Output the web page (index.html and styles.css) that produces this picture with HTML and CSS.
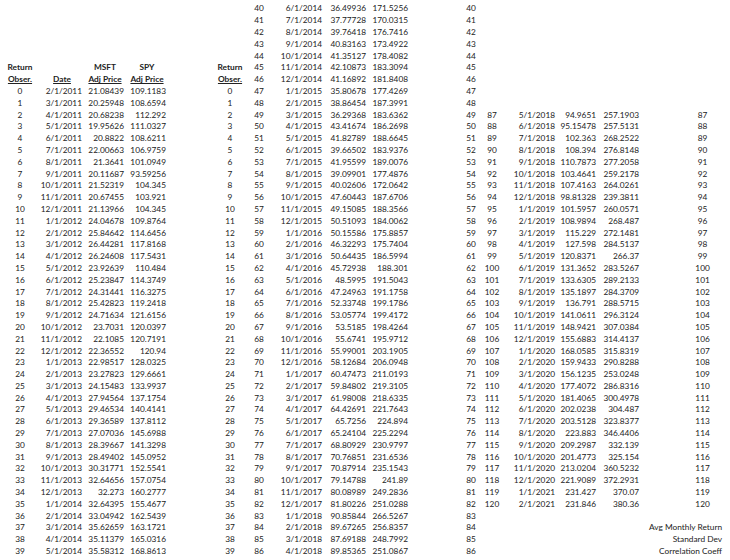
FILE: index.html
```html
<!DOCTYPE html>
<html>
<head>
<meta charset="utf-8">
<title>MSFT SPY Returns</title>
<link rel="stylesheet" href="styles.css">
</head>
<body>
<table class="sheet">
<colgroup>
<col class="ca"><col class="cb"><col class="cc"><col class="cd"><col class="g1">
<col class="ce"><col class="cf"><col class="cg"><col class="ch"><col class="ci"><col class="g2">
<col class="cj"><col class="ck"><col class="cl"><col class="cm"><col class="cn"><col class="g3"><col class="co">
</colgroup>
<tbody>
<tr><td colspan="6"></td><td class="i">40</td><td>6/1/2014</td><td>36.49936</td><td>171.5256</td><td></td><td class="i">40</td><td colspan="6"></td></tr>
<tr><td colspan="6"></td><td class="i">41</td><td>7/1/2014</td><td>37.77728</td><td>170.0315</td><td></td><td class="i">41</td><td colspan="6"></td></tr>
<tr><td colspan="6"></td><td class="i">42</td><td>8/1/2014</td><td>39.76418</td><td>176.7416</td><td></td><td class="i">42</td><td colspan="6"></td></tr>
<tr><td colspan="6"></td><td class="i">43</td><td>9/1/2014</td><td>40.83163</td><td>173.4922</td><td></td><td class="i">43</td><td colspan="6"></td></tr>
<tr><td colspan="6"></td><td class="i">44</td><td>10/1/2014</td><td>41.35127</td><td>178.4082</td><td></td><td class="i">44</td><td colspan="6"></td></tr>
<tr><td class="h">Return</td><td></td><td class="h">MSFT</td><td class="h">SPY</td><td></td><td class="h">Return</td><td class="i">45</td><td>11/1/2014</td><td>42.10873</td><td>183.3094</td><td></td><td class="i">45</td><td colspan="6"></td></tr>
<tr><td class="h u">Obser.</td><td class="h u">Date</td><td class="h u">Adj Price</td><td class="h u">Adj Price</td><td></td><td class="h u">Obser.</td><td class="i">46</td><td>12/1/2014</td><td>41.16892</td><td>181.8408</td><td></td><td class="i">46</td><td colspan="6"></td></tr>
<tr><td class="i">0</td><td>2/1/2011</td><td>21.08439</td><td>109.1183</td><td></td><td class="i">0</td><td class="i">47</td><td>1/1/2015</td><td>35.80678</td><td>177.4269</td><td></td><td class="i">47</td><td colspan="6"></td></tr>
<tr><td class="i">1</td><td>3/1/2011</td><td>20.25948</td><td>108.6594</td><td></td><td class="i">1</td><td class="i">48</td><td>2/1/2015</td><td>38.86454</td><td>187.3991</td><td></td><td class="i">48</td><td colspan="6"></td></tr>
<tr><td class="i">2</td><td>4/1/2011</td><td>20.68238</td><td>112.292</td><td></td><td class="i">2</td><td class="i">49</td><td>3/1/2015</td><td>36.29368</td><td>183.6362</td><td></td><td class="i">49</td><td class="i">87</td><td>5/1/2018</td><td>94.9651</td><td>257.1903</td><td></td><td class="i">87</td></tr>
<tr><td class="i">3</td><td>5/1/2011</td><td>19.95626</td><td>111.0327</td><td></td><td class="i">3</td><td class="i">50</td><td>4/1/2015</td><td>43.41674</td><td>186.2698</td><td></td><td class="i">50</td><td class="i">88</td><td>6/1/2018</td><td>95.15478</td><td>257.5131</td><td></td><td class="i">88</td></tr>
<tr><td class="i">4</td><td>6/1/2011</td><td>20.8822</td><td>108.6211</td><td></td><td class="i">4</td><td class="i">51</td><td>5/1/2015</td><td>41.82789</td><td>188.6645</td><td></td><td class="i">51</td><td class="i">89</td><td>7/1/2018</td><td>102.363</td><td>268.2522</td><td></td><td class="i">89</td></tr>
<tr><td class="i">5</td><td>7/1/2011</td><td>22.00663</td><td>106.9759</td><td></td><td class="i">5</td><td class="i">52</td><td>6/1/2015</td><td>39.66502</td><td>183.9376</td><td></td><td class="i">52</td><td class="i">90</td><td>8/1/2018</td><td>108.394</td><td>276.8148</td><td></td><td class="i">90</td></tr>
<tr><td class="i">6</td><td>8/1/2011</td><td>21.3641</td><td>101.0949</td><td></td><td class="i">6</td><td class="i">53</td><td>7/1/2015</td><td>41.95599</td><td>189.0076</td><td></td><td class="i">53</td><td class="i">91</td><td>9/1/2018</td><td>110.7873</td><td>277.2058</td><td></td><td class="i">91</td></tr>
<tr><td class="i">7</td><td>9/1/2011</td><td>20.11687</td><td>93.59256</td><td></td><td class="i">7</td><td class="i">54</td><td>8/1/2015</td><td>39.09901</td><td>177.4876</td><td></td><td class="i">54</td><td class="i">92</td><td>10/1/2018</td><td>103.4641</td><td>259.2178</td><td></td><td class="i">92</td></tr>
<tr><td class="i">8</td><td>10/1/2011</td><td>21.52319</td><td>104.345</td><td></td><td class="i">8</td><td class="i">55</td><td>9/1/2015</td><td>40.02606</td><td>172.0642</td><td></td><td class="i">55</td><td class="i">93</td><td>11/1/2018</td><td>107.4163</td><td>264.0261</td><td></td><td class="i">93</td></tr>
<tr><td class="i">9</td><td>11/1/2011</td><td>20.67455</td><td>103.921</td><td></td><td class="i">9</td><td class="i">56</td><td>10/1/2015</td><td>47.60443</td><td>187.6706</td><td></td><td class="i">56</td><td class="i">94</td><td>12/1/2018</td><td>98.81328</td><td>239.3811</td><td></td><td class="i">94</td></tr>
<tr><td class="i">10</td><td>12/1/2011</td><td>21.13966</td><td>104.345</td><td></td><td class="i">10</td><td class="i">57</td><td>11/1/2015</td><td>49.15085</td><td>188.3566</td><td></td><td class="i">57</td><td class="i">95</td><td>1/1/2019</td><td>101.5957</td><td>260.0571</td><td></td><td class="i">95</td></tr>
<tr><td class="i">11</td><td>1/1/2012</td><td>24.04678</td><td>109.8764</td><td></td><td class="i">11</td><td class="i">58</td><td>12/1/2015</td><td>50.51093</td><td>184.0062</td><td></td><td class="i">58</td><td class="i">96</td><td>2/1/2019</td><td>108.9894</td><td>268.487</td><td></td><td class="i">96</td></tr>
<tr><td class="i">12</td><td>2/1/2012</td><td>25.84642</td><td>114.6456</td><td></td><td class="i">12</td><td class="i">59</td><td>1/1/2016</td><td>50.15586</td><td>175.8857</td><td></td><td class="i">59</td><td class="i">97</td><td>3/1/2019</td><td>115.229</td><td>272.1481</td><td></td><td class="i">97</td></tr>
<tr><td class="i">13</td><td>3/1/2012</td><td>26.44281</td><td>117.8168</td><td></td><td class="i">13</td><td class="i">60</td><td>2/1/2016</td><td>46.32293</td><td>175.7404</td><td></td><td class="i">60</td><td class="i">98</td><td>4/1/2019</td><td>127.598</td><td>284.5137</td><td></td><td class="i">98</td></tr>
<tr><td class="i">14</td><td>4/1/2012</td><td>26.24608</td><td>117.5431</td><td></td><td class="i">14</td><td class="i">61</td><td>3/1/2016</td><td>50.64435</td><td>186.5994</td><td></td><td class="i">61</td><td class="i">99</td><td>5/1/2019</td><td>120.8371</td><td>266.37</td><td></td><td class="i">99</td></tr>
<tr><td class="i">15</td><td>5/1/2012</td><td>23.92639</td><td>110.484</td><td></td><td class="i">15</td><td class="i">62</td><td>4/1/2016</td><td>45.72938</td><td>188.301</td><td></td><td class="i">62</td><td class="i">100</td><td>6/1/2019</td><td>131.3652</td><td>283.5267</td><td></td><td class="i">100</td></tr>
<tr><td class="i">16</td><td>6/1/2012</td><td>25.23847</td><td>114.3749</td><td></td><td class="i">16</td><td class="i">63</td><td>5/1/2016</td><td>48.5995</td><td>191.5043</td><td></td><td class="i">63</td><td class="i">101</td><td>7/1/2019</td><td>133.6305</td><td>289.2133</td><td></td><td class="i">101</td></tr>
<tr><td class="i">17</td><td>7/1/2012</td><td>24.31441</td><td>116.3275</td><td></td><td class="i">17</td><td class="i">64</td><td>6/1/2016</td><td>47.24963</td><td>191.1758</td><td></td><td class="i">64</td><td class="i">102</td><td>8/1/2019</td><td>135.1897</td><td>284.3709</td><td></td><td class="i">102</td></tr>
<tr><td class="i">18</td><td>8/1/2012</td><td>25.42823</td><td>119.2418</td><td></td><td class="i">18</td><td class="i">65</td><td>7/1/2016</td><td>52.33748</td><td>199.1786</td><td></td><td class="i">65</td><td class="i">103</td><td>9/1/2019</td><td>136.791</td><td>288.5715</td><td></td><td class="i">103</td></tr>
<tr><td class="i">19</td><td>9/1/2012</td><td>24.71634</td><td>121.6156</td><td></td><td class="i">19</td><td class="i">66</td><td>8/1/2016</td><td>53.05774</td><td>199.4172</td><td></td><td class="i">66</td><td class="i">104</td><td>10/1/2019</td><td>141.0611</td><td>296.3124</td><td></td><td class="i">104</td></tr>
<tr><td class="i">20</td><td>10/1/2012</td><td>23.7031</td><td>120.0397</td><td></td><td class="i">20</td><td class="i">67</td><td>9/1/2016</td><td>53.5185</td><td>198.4264</td><td></td><td class="i">67</td><td class="i">105</td><td>11/1/2019</td><td>148.9421</td><td>307.0384</td><td></td><td class="i">105</td></tr>
<tr><td class="i">21</td><td>11/1/2012</td><td>22.1085</td><td>120.7191</td><td></td><td class="i">21</td><td class="i">68</td><td>10/1/2016</td><td>55.6741</td><td>195.9712</td><td></td><td class="i">68</td><td class="i">106</td><td>12/1/2019</td><td>155.6883</td><td>314.4137</td><td></td><td class="i">106</td></tr>
<tr><td class="i">22</td><td>12/1/2012</td><td>22.36552</td><td>120.94</td><td></td><td class="i">22</td><td class="i">69</td><td>11/1/2016</td><td>55.99001</td><td>203.1905</td><td></td><td class="i">69</td><td class="i">107</td><td>1/1/2020</td><td>168.0585</td><td>315.8319</td><td></td><td class="i">107</td></tr>
<tr><td class="i">23</td><td>1/1/2013</td><td>22.98517</td><td>128.0325</td><td></td><td class="i">23</td><td class="i">70</td><td>12/1/2016</td><td>58.12684</td><td>206.0948</td><td></td><td class="i">70</td><td class="i">108</td><td>2/1/2020</td><td>159.9433</td><td>290.8288</td><td></td><td class="i">108</td></tr>
<tr><td class="i">24</td><td>2/1/2013</td><td>23.27823</td><td>129.6661</td><td></td><td class="i">24</td><td class="i">71</td><td>1/1/2017</td><td>60.47473</td><td>211.0193</td><td></td><td class="i">71</td><td class="i">109</td><td>3/1/2020</td><td>156.1235</td><td>253.0248</td><td></td><td class="i">109</td></tr>
<tr><td class="i">25</td><td>3/1/2013</td><td>24.15483</td><td>133.9937</td><td></td><td class="i">25</td><td class="i">72</td><td>2/1/2017</td><td>59.84802</td><td>219.3105</td><td></td><td class="i">72</td><td class="i">110</td><td>4/1/2020</td><td>177.4072</td><td>286.8316</td><td></td><td class="i">110</td></tr>
<tr><td class="i">26</td><td>4/1/2013</td><td>27.94564</td><td>137.1754</td><td></td><td class="i">26</td><td class="i">73</td><td>3/1/2017</td><td>61.98008</td><td>218.6335</td><td></td><td class="i">73</td><td class="i">111</td><td>5/1/2020</td><td>181.4065</td><td>300.4978</td><td></td><td class="i">111</td></tr>
<tr><td class="i">27</td><td>5/1/2013</td><td>29.46534</td><td>140.4141</td><td></td><td class="i">27</td><td class="i">74</td><td>4/1/2017</td><td>64.42691</td><td>221.7643</td><td></td><td class="i">74</td><td class="i">112</td><td>6/1/2020</td><td>202.0238</td><td>304.487</td><td></td><td class="i">112</td></tr>
<tr><td class="i">28</td><td>6/1/2013</td><td>29.36589</td><td>137.8112</td><td></td><td class="i">28</td><td class="i">75</td><td>5/1/2017</td><td>65.7256</td><td>224.894</td><td></td><td class="i">75</td><td class="i">113</td><td>7/1/2020</td><td>203.5128</td><td>323.8377</td><td></td><td class="i">113</td></tr>
<tr><td class="i">29</td><td>7/1/2013</td><td>27.07036</td><td>145.6988</td><td></td><td class="i">29</td><td class="i">76</td><td>6/1/2017</td><td>65.24104</td><td>225.2294</td><td></td><td class="i">76</td><td class="i">114</td><td>8/1/2020</td><td>223.883</td><td>346.4406</td><td></td><td class="i">114</td></tr>
<tr><td class="i">30</td><td>8/1/2013</td><td>28.39667</td><td>141.3298</td><td></td><td class="i">30</td><td class="i">77</td><td>7/1/2017</td><td>68.80929</td><td>230.9797</td><td></td><td class="i">77</td><td class="i">115</td><td>9/1/2020</td><td>209.2987</td><td>332.139</td><td></td><td class="i">115</td></tr>
<tr><td class="i">31</td><td>9/1/2013</td><td>28.49402</td><td>145.0952</td><td></td><td class="i">31</td><td class="i">78</td><td>8/1/2017</td><td>70.76851</td><td>231.6536</td><td></td><td class="i">78</td><td class="i">116</td><td>10/1/2020</td><td>201.4773</td><td>325.154</td><td></td><td class="i">116</td></tr>
<tr><td class="i">32</td><td>10/1/2013</td><td>30.31771</td><td>152.5541</td><td></td><td class="i">32</td><td class="i">79</td><td>9/1/2017</td><td>70.87914</td><td>235.1543</td><td></td><td class="i">79</td><td class="i">117</td><td>11/1/2020</td><td>213.0204</td><td>360.5232</td><td></td><td class="i">117</td></tr>
<tr><td class="i">33</td><td>11/1/2013</td><td>32.64656</td><td>157.0754</td><td></td><td class="i">33</td><td class="i">80</td><td>10/1/2017</td><td>79.14788</td><td>241.89</td><td></td><td class="i">80</td><td class="i">118</td><td>12/1/2020</td><td>221.9089</td><td>372.2931</td><td></td><td class="i">118</td></tr>
<tr><td class="i">34</td><td>12/1/2013</td><td>32.273</td><td>160.2777</td><td></td><td class="i">34</td><td class="i">81</td><td>11/1/2017</td><td>80.08989</td><td>249.2836</td><td></td><td class="i">81</td><td class="i">119</td><td>1/1/2021</td><td>231.427</td><td>370.07</td><td></td><td class="i">119</td></tr>
<tr><td class="i">35</td><td>1/1/2014</td><td>32.64395</td><td>155.4677</td><td></td><td class="i">35</td><td class="i">82</td><td>12/1/2017</td><td>81.80226</td><td>251.0288</td><td></td><td class="i">82</td><td class="i">120</td><td>2/1/2021</td><td>231.846</td><td>380.36</td><td></td><td class="i">120</td></tr>
<tr><td class="i">36</td><td>2/1/2014</td><td>33.04942</td><td>162.5439</td><td></td><td class="i">36</td><td class="i">83</td><td>1/1/2018</td><td>90.85844</td><td>266.5267</td><td></td><td class="i">83</td><td colspan="6"></td></tr>
<tr><td class="i">37</td><td>3/1/2014</td><td>35.62659</td><td>163.1721</td><td></td><td class="i">37</td><td class="i">84</td><td>2/1/2018</td><td>89.67265</td><td>256.8357</td><td></td><td class="i">84</td><td colspan="2"></td><td colspan="4" class="lbl">Avg Monthly Return</td></tr>
<tr><td class="i">38</td><td>4/1/2014</td><td>35.11379</td><td>165.0316</td><td></td><td class="i">38</td><td class="i">85</td><td>3/1/2018</td><td>87.69188</td><td>248.7992</td><td></td><td class="i">85</td><td colspan="2"></td><td colspan="4" class="lbl">Standard Dev</td></tr>
<tr><td class="i">39</td><td>5/1/2014</td><td>35.58312</td><td>168.8613</td><td></td><td class="i">39</td><td class="i">86</td><td>4/1/2018</td><td>89.85365</td><td>251.0867</td><td></td><td class="i">86</td><td colspan="2"></td><td colspan="4" class="lbl">Correlation Coeff</td></tr>
</tbody>
</table>
</body>
</html>
```

FILE: styles.css
```css
html, body {
  margin: 0;
  background: #ffffff;
}

body {
  padding-top: 3.4px;
  font-family: Lato, "Noto Sans", sans-serif;
  font-size: 8.3px;
  color: #222222;
}

.sheet {
  border-collapse: collapse;
  border-spacing: 0;
  table-layout: fixed;
  width: 723px;
}

.sheet td {
  height: 11.8px;
  padding: 0 2px 0 0;
  line-height: 11.8px;
  text-align: right;
  white-space: nowrap;
  vertical-align: middle;
  overflow: visible;
}

.sheet td.i {
  text-align: center;
  padding: 0;
}

.sheet td.h {
  text-align: center;
  padding: 0;
  font-weight: 700;
}

.sheet td.u {
  text-decoration: underline;
  text-underline-offset: 1px;
}

.sheet td.lbl {
  padding-right: 1px;
}

.ca { width: 40px; }
.cb { width: 44px; }
.cc { width: 42px; }
.cd { width: 42px; }
.g1 { width: 42px; }
.ce { width: 40px; }
.cf { width: 18px; }
.cg { width: 56px; }
.ch { width: 44px; }
.ci { width: 42px; }
.g2 { width: 48px; }
.cj { width: 26px; }
.ck { width: 16px; }
.cl { width: 57px; }
.cm { width: 41px; }
.cn { width: 43px; }
.g3 { width: 41px; }
.co { width: 41px; }
```
